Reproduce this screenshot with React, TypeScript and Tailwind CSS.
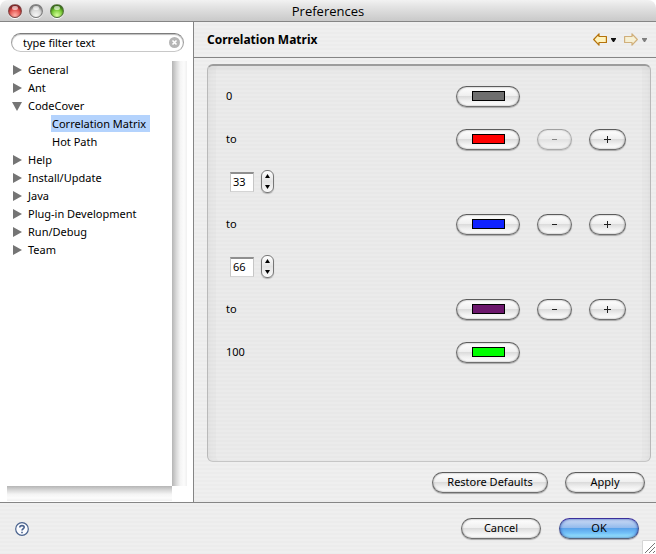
import { useState, type ReactNode } from "react";

const STRIPES =
  "bg-[repeating-linear-gradient(180deg,#efefef_0px,#efefef_2px,#ececec_2px,#ececec_4px)]";

const GROUP_FILL =
  "bg-[repeating-linear-gradient(180deg,#ebebeb_0px,#ebebeb_2px,#e8e8e8_2px,#e8e8e8_4px)]";

const AQUA =
  "border border-t-[#5c5c5c] border-x-[#6a6a6a] border-b-[#6e6e6e] bg-[linear-gradient(180deg,#ffffff_0%,#efefef_46%,#dcdcdc_50%,#efefef_72%,#ffffff_100%)] shadow-[inset_0_0_2px_#8c8c8c,0_1px_1px_#a8a8a8]";

const AQUA_DEFAULT =
  "border border-t-[#3b2f9c] border-x-[#3f4f93] border-b-[#56657c] bg-[linear-gradient(180deg,#cfdcf5_0%,#93bbed_46%,#5ba3ea_50%,#74c2f8_75%,#a6f1ff_100%)] shadow-[inset_0_0_3px_#2f56b4,0_1px_1px_#a0a0ac]";

type Node = { name: string; open?: boolean; children?: string[] };

const TREE: Node[] = [
  { name: "General" },
  { name: "Ant" },
  { name: "CodeCover", open: true, children: ["Correlation Matrix", "Hot Path"] },
  { name: "Help" },
  { name: "Install/Update" },
  { name: "Java" },
  { name: "Plug-in Development" },
  { name: "Run/Debug" },
  { name: "Team" },
];

function TrafficLight({ label, tone }: { label: string; tone: string }) {
  return (
    <button
      aria-label={label}
      className={`relative h-3.5 w-3.5 rounded-full border border-[#444]/60 shadow-[inset_0_2px_2px_rgba(0,0,0,0.4),0_1px_0_#fff] ${tone}`}
    >
      <span className="absolute top-px left-[3px] h-1 w-1.5 rounded-full bg-white/60" />
    </button>
  );
}

function TitleBar() {
  return (
    <header className="grid h-[22px] grid-cols-[1fr_auto_1fr] items-center rounded-t-lg border-b border-[#858585] bg-[linear-gradient(180deg,#f2f2f2_0%,#e4e4e4_30%,#c9c9c9_100%)] px-2">
      <div className="flex gap-[7px]">
        <TrafficLight label="Close" tone="bg-[radial-gradient(circle_at_50%_85%,#ffb0a8_0%,#e4504c_50%,#b8242a_100%)]" />
        <TrafficLight label="Minimize" tone="bg-[radial-gradient(circle_at_50%_85%,#f6f6f6_0%,#d8d8d8_50%,#b9b9b9_100%)]" />
        <TrafficLight label="Zoom" tone="bg-[radial-gradient(circle_at_50%_85%,#d6ff9a_0%,#74c832_50%,#3d8f14_100%)]" />
      </div>
      <h1 className="font-['Open_Sans',sans-serif] text-[13px] leading-5">Preferences</h1>
      <span />
    </header>
  );
}

function Disclosure({ open }: { open?: boolean }) {
  return (
    <svg width="10" height="10" viewBox="0 0 10 10" fill="#757575" aria-hidden="true">
      {open ? <path d="M0 1h10L5 10z" /> : <path d="M1 0v10l9-5z" />}
    </svg>
  );
}

function Sidebar() {
  const [filter, setFilter] = useState("type filter text");
  return (
    <aside className="flex w-[194px] shrink-0 flex-col border-r border-[#858585] bg-white pt-[11px]">
      <div className="mr-[9px] ml-[11px] flex h-[19px] items-center rounded-full border border-t-[#7c7c7c] border-x-[#a0a0a0] border-b-[#c8c8c8] pr-[3px] pl-[11px] shadow-[inset_0_1px_1px_#bdbdbd]">
        <input
          aria-label="Filter"
          value={filter}
          onChange={(e) => setFilter(e.target.value)}
          className="min-w-0 flex-1 bg-transparent leading-4 outline-none"
        />
        <button aria-label="Clear filter" onClick={() => setFilter("")}>
          <svg width="11" height="11" viewBox="0 0 11 11">
            <circle cx="5.5" cy="5.5" r="5.5" fill="#b5b5b5" />
            <path d="M3.5 3.5l4 4M7.5 3.5l-4 4" stroke="#fff" strokeWidth="1.6" />
          </svg>
        </button>
      </div>
      <div className="mt-[9px] mr-1.5 mb-px ml-[7px] grid flex-1 grid-cols-[1fr_15px] grid-rows-[1fr_15px]">
        <ul className="leading-[18px]">
          {TREE.map((node) => (
            <li key={node.name}>
              <button className="flex w-full items-center gap-1.5 pl-[5px] text-left whitespace-nowrap">
                <Disclosure open={node.open} />
                {node.name}
              </button>
              {node.children && (
                <ul className="pl-11">
                  {node.children.map((child, i) => (
                    <li key={child} className="flex h-[18px] items-start">
                      <button
                        className={`px-px leading-[17px] whitespace-nowrap ${i === 0 ? "bg-[#b4d3fd] pr-1" : ""}`}
                      >
                        {child}
                      </button>
                    </li>
                  ))}
                </ul>
              )}
            </li>
          ))}
        </ul>
        <div className="bg-[linear-gradient(90deg,#b5b5b5_0%,#dadada_30%,#f4f4f4_55%,#fcfcfc_80%,#f0f0f0_100%)]" />
        <div className="bg-[linear-gradient(180deg,#b5b5b5_0%,#dadada_30%,#f4f4f4_55%,#fcfcfc_80%,#f0f0f0_100%)]" />
      </div>
    </aside>
  );
}

function HistoryArrow({ forward }: { forward?: boolean }) {
  return (
    <button aria-label={forward ? "Forward" : "Back"} disabled={forward} className="disabled:opacity-50">
      <svg width="14" height="13" viewBox="0 0 14 13" className={forward ? "-scale-x-100" : ""}>
        <path
          d="M.7 6.500L6 .8V3.500h7.400v6H6v2.700z"
          fill="#fff3bd"
          stroke="#b5720a"
          strokeWidth="1.2"
          strokeLinejoin="round"
        />
      </svg>
    </button>
  );
}

function MenuArrow({ label, disabled }: { label: string; disabled?: boolean }) {
  return (
    <button aria-label={label} disabled={disabled} className="disabled:opacity-50">
      <svg width="5" height="4" viewBox="0 0 5 4">
        <path d="M0 0h5v1L3 4H2L0 1z" fill="#111" />
      </svg>
    </button>
  );
}

function PageHeader() {
  return (
    <div className="flex h-9 items-center border-b border-[#858585] pr-[9px] pl-[13px]">
      <h2 className="flex-1 text-[12px] font-bold">Correlation Matrix</h2>
      <div className="flex items-center gap-2">
        <div className="flex items-center gap-1">
          <HistoryArrow />
          <MenuArrow label="Back history" />
        </div>
        <div className="flex items-center gap-1">
          <HistoryArrow forward />
          <MenuArrow label="Forward history" disabled />
        </div>
      </div>
    </div>
  );
}

function ColorButton({ label, color }: { label: string; color: string }) {
  return (
    <button aria-label={label} className={`flex h-[21px] w-16 items-center justify-center rounded-full ${AQUA}`}>
      <span className={`h-2.5 w-[33px] border border-black ${color}`} />
    </button>
  );
}

function SignButton({ sign, disabled }: { sign: "-" | "+"; disabled?: boolean }) {
  return (
    <button
      aria-label={sign === "-" ? "Remove range" : "Add range"}
      disabled={disabled}
      className={`flex h-[21px] w-full items-center justify-center rounded-full disabled:opacity-50 ${AQUA}`}
    >
      <svg width="7" height="7" viewBox="0 0 7 7" stroke="#222" aria-hidden="true">
        {sign === "-" ? <path d="M1 3.500h5" /> : <path d="M0 3.500h7M3.500 0v7" />}
      </svg>
    </button>
  );
}

function RangeRow({
  label,
  color,
  signs,
  removable = true,
}: {
  label: string;
  color: string;
  signs?: boolean;
  removable?: boolean;
}) {
  return (
    <div className="grid h-[22px] grid-cols-[1fr_64px_35px_37px] items-center gap-[17px]">
      <span>{label}</span>
      <ColorButton label={`Color for ${label}`} color={color} />
      {signs && <SignButton sign="-" disabled={!removable} />}
      {signs && <SignButton sign="+" />}
    </div>
  );
}

function SpinnerRow({ initial }: { initial: number }) {
  const [value, setValue] = useState(initial);
  return (
    <div className="flex h-[21px] items-center gap-[7px] pl-1">
      <input
        aria-label="Boundary"
        value={value}
        onChange={(e) => setValue(Number(e.target.value) || 0)}
        className="h-5 w-6 border border-t-2 border-t-[#8f8f8f] border-x-[#c6c6c6] border-b-[#d4d4d4] bg-white px-0.5 pb-0.5 leading-4 outline-none"
      />
      <div className="flex h-[23px] w-[13px] flex-col rounded-[6px] border border-[#777] bg-[linear-gradient(180deg,#ffffff,#e4e4e4_50%,#fafafa)] shadow-[0_1px_1px_#b4b4b4]">
        <button aria-label="Increase" className="flex flex-1 items-center justify-center" onClick={() => setValue(value + 1)}>
          <svg width="5" height="4" viewBox="0 0 5 4"><path d="M0 4L2.500 0L5 4z" /></svg>
        </button>
        <button aria-label="Decrease" className="flex flex-1 items-center justify-center" onClick={() => setValue(value - 1)}>
          <svg width="5" height="4" viewBox="0 0 5 4"><path d="M0 0h5L2.500 4z" /></svg>
        </button>
      </div>
    </div>
  );
}

function PushButton({ children, width, primary }: { children: ReactNode; width: string; primary?: boolean }) {
  return (
    <button className={`h-[21px] rounded-full pb-px leading-[18px] ${width} ${primary ? AQUA_DEFAULT : AQUA}`}>
      {children}
    </button>
  );
}

export default function App() {
  return (
    <div className="bg-white font-['Noto_Sans','Lucida_Grande',sans-serif] text-[11px] text-black">
      <div className="flex min-h-screen flex-col">
        <TitleBar />
        <div className="flex flex-1">
          <Sidebar />
          <main className={`flex min-w-0 flex-1 flex-col ${STRIPES}`}>
            <PageHeader />
            <section
              className={`mt-1.5 mr-[5px] ml-[13px] flex flex-1 flex-col gap-[21px] rounded-md border border-t-2 border-t-[#9c9c9c] border-x-[#b9b9b9] border-b-[#c6c6c6] pt-[19px] pr-6 pl-[18px] shadow-[inset_0_3px_6px_rgba(0,0,0,0.05),inset_9px_0_0_-1px_rgba(0,0,0,0.015),inset_-9px_0_0_-1px_rgba(0,0,0,0.015)] ${GROUP_FILL}`}
            >
              <RangeRow label="0" color="bg-[#6e6e6e]" />
              <RangeRow label="to" color="bg-[#ff0000]" signs removable={false} />
              <SpinnerRow initial={33} />
              <RangeRow label="to" color="bg-[#0f22ff]" signs />
              <SpinnerRow initial={66} />
              <RangeRow label="to" color="bg-[#6c176c]" signs />
              <RangeRow label="100" color="bg-[#00ff00]" />
            </section>
            <div className="flex justify-end gap-[17px] pt-2.5 pr-[11px] pb-[9px]">
              <PushButton width="w-[116px]">Restore Defaults</PushButton>
              <PushButton width="w-20">Apply</PushButton>
            </div>
          </main>
        </div>
        <footer className={`flex h-[52px] items-center border-t border-[#858585] pl-[15px] ${STRIPES}`}>
          <button aria-label="Help">
            <svg width="14" height="14" viewBox="0 0 14 14" fill="none" stroke="#4a638e">
              <circle cx="7" cy="7" r="6.300" fill="#fbfcff" strokeWidth="1.200" />
              <path d="M4.800 5.500C4.800 3 9.200 3 9.200 5.300C9.200 6.800 7 6.700 7 8.600M7 9.800v1.400" strokeWidth="1.600" />
            </svg>
          </button>
          <div className="ml-auto flex gap-[18px] pr-[3px]">
            <PushButton width="w-20">Cancel</PushButton>
            <PushButton width="w-20" primary>OK</PushButton>
          </div>
          <svg width="14" height="14" viewBox="0 0 14 14" className="self-end" aria-hidden="true">
            <path d="M0 0h14v14H0z" fill="#fff" />
            <path d="M.5 14V.5H14" fill="none" stroke="#d5d5d5" />
            <path d="M3 13L13 3M7 13l6-6M11 13l2-2" stroke="#777" fill="none" />
          </svg>
        </footer>
      </div>
    </div>
  );
}
